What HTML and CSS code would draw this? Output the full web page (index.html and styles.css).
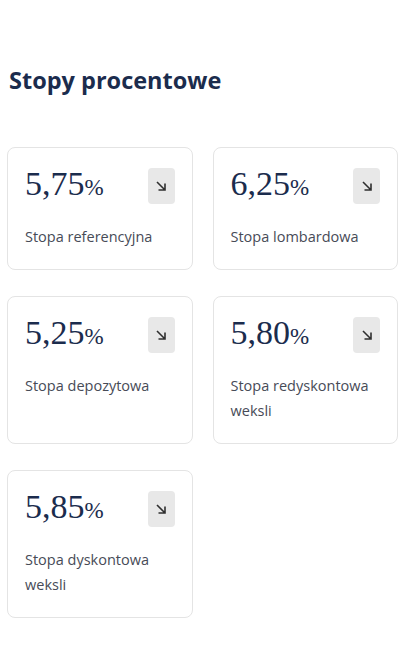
FILE: index.html
```html
<!DOCTYPE html>
<html lang="pl">
<head>
<meta charset="utf-8">
<title>Stopy procentowe</title>
<link rel="stylesheet" href="styles.css">
</head>
<body>
<main class="page">
  <h2 class="title">Stopy procentowe</h2>
  <div class="grid">
    <div class="card">
      <div class="card-head">
        <div class="value">5,75<span class="pct">%</span></div>
        <button class="trend" aria-label="spadek"><svg viewBox="0 0 12 12" width="12" height="12"><path d="M2 2L10 10M10 3.5V10H3.5" fill="none" stroke="#2f2f2f" stroke-width="1.6"/></svg></button>
      </div>
      <div class="label">Stopa referencyjna</div>
    </div>
    <div class="card">
      <div class="card-head">
        <div class="value">6,25<span class="pct">%</span></div>
        <button class="trend" aria-label="spadek"><svg viewBox="0 0 12 12" width="12" height="12"><path d="M2 2L10 10M10 3.5V10H3.5" fill="none" stroke="#2f2f2f" stroke-width="1.6"/></svg></button>
      </div>
      <div class="label">Stopa lombardowa</div>
    </div>
    <div class="card">
      <div class="card-head">
        <div class="value">5,25<span class="pct">%</span></div>
        <button class="trend" aria-label="spadek"><svg viewBox="0 0 12 12" width="12" height="12"><path d="M2 2L10 10M10 3.5V10H3.5" fill="none" stroke="#2f2f2f" stroke-width="1.6"/></svg></button>
      </div>
      <div class="label">Stopa depozytowa</div>
    </div>
    <div class="card">
      <div class="card-head">
        <div class="value">5,80<span class="pct">%</span></div>
        <button class="trend" aria-label="spadek"><svg viewBox="0 0 12 12" width="12" height="12"><path d="M2 2L10 10M10 3.5V10H3.5" fill="none" stroke="#2f2f2f" stroke-width="1.6"/></svg></button>
      </div>
      <div class="label">Stopa redyskontowa weksli</div>
    </div>
    <div class="card">
      <div class="card-head">
        <div class="value">5,85<span class="pct">%</span></div>
        <button class="trend" aria-label="spadek"><svg viewBox="0 0 12 12" width="12" height="12"><path d="M2 2L10 10M10 3.5V10H3.5" fill="none" stroke="#2f2f2f" stroke-width="1.6"/></svg></button>
      </div>
      <div class="label">Stopa dyskontowa weksli</div>
    </div>
  </div>
</main>
</body>
</html>
```
FILE: styles.css
```css
* { box-sizing: border-box; }
html, body { margin: 0; padding: 0; background: #fff; }
body { font-family: "Open Sans", "Noto Sans", sans-serif; }
.page { padding: 64px 14px 40px 7px; }
.title {
  margin: 0 0 0 2px;
  font-size: 23.5px;
  line-height: 32px;
  font-weight: 700;
  color: #1b2c4d;
}
.grid {
  margin-top: 51px;
  display: grid;
  grid-template-columns: 1fr 1fr;
  column-gap: 20px;
  row-gap: 26px;
}
.card {
  border: 1px solid #e4e4e4;
  border-radius: 8px;
  padding: 20px 17px 20px 17px;
  background: #fff;
}
.card-head {
  display: flex;
  justify-content: space-between;
  align-items: center;
  height: 36px;
}
.value {
  font-family: "Liberation Serif", "Times New Roman", serif;
  font-size: 34px;
  color: #1b2c4d;
  line-height: 36px;
}
.pct { font-size: 23px; }
.trend {
  width: 27px;
  height: 36px;
  border: 0;
  border-radius: 4px;
  background: #e8e8e8;
  padding: 0;
  display: flex;
  align-items: center;
  justify-content: center;
}
.trend svg { display: block; }
.label {
  margin-top: 20px;
  font-size: 14.5px;
  line-height: 25px;
  color: #474b57;
}
```
